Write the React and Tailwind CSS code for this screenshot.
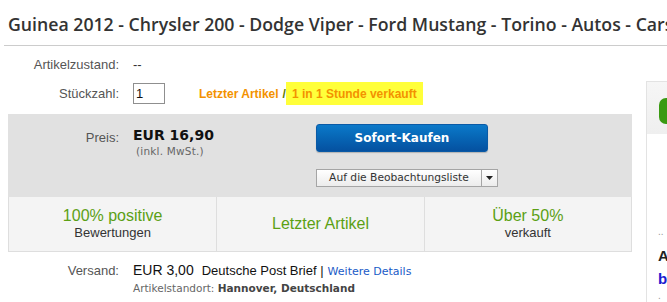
import React from "react";

export default function App() {
  const arial = { fontFamily: '"Liberation Sans", Arial, sans-serif' };
  const verdana = { fontFamily: '"DejaVu Sans", Verdana, sans-serif' };
  return (
    <div className="w-[667px] h-[302px] overflow-hidden bg-white relative" style={arial}>
      {/* Title */}
      <div className="h-[45px] pl-2 pt-[12px] whitespace-nowrap overflow-hidden">
        <h1 className="text-[17.7px] leading-[24px] font-semibold text-[#333]" style={{ fontFamily: '"Open Sans", sans-serif' }}>
          Guinea 2012 - Chrysler 200 - Dodge Viper - Ford Mustang - Torino - Autos - Cars
        </h1>
      </div>
      <div className="ml-1 h-px bg-[#cccccc]" />

      <div className="flex items-start">
        {/* Left column */}
        <div className="ml-2 w-[624px] shrink-0">
          <div className="mt-[10px] h-[18px] flex items-center">
            <div className="w-[111px] text-right text-[13px] text-[#555]">Artikelzustand:</div>
            <div className="ml-[14px] text-[13px] text-[#333]">--</div>
          </div>
          <div className="mt-[9px] h-[21px] flex items-center">
            <div className="w-[111px] text-right text-[13px] text-[#555]">Stückzahl:</div>
            <div className="ml-[14px] w-[32px] h-[21px] border border-[#8f8f8f] text-[13px] text-[#111] pl-[2px] leading-[19px]">1</div>
            <div className="ml-[34px] text-[12px] font-bold text-[#f39200] flex items-center">
              <span>Letzter Artikel</span>
              <span className="ml-[4px] text-[#5a7a00]">/</span>
              <span className="bg-[#ffff3a] h-[23px] w-[137px] flex items-center pl-[6px]">1 in 1 Stunde verkauft</span>
            </div>
          </div>

          {/* Gray box */}
          <div className="mt-[10px] h-[83px] bg-[#e1e1e1] flex">
            <div className="w-[111px] text-right text-[13px] text-[#555] pt-[14px]">Preis:</div>
            <div className="ml-[14px] w-[183px] pt-[11px]" style={verdana}>
              <div className="text-[14px] font-bold text-[#111] leading-[20px]">EUR 16,90</div>
              <div className="ml-[3px] text-[10.5px] tracking-[0.2px] text-[#666] leading-[13px]">(inkl. MwSt.)</div>
            </div>
            <div className="pt-[10px]" style={verdana}>
              <div className="w-[172px] h-[28px] rounded-[3px] bg-gradient-to-b from-[#0b79c9] to-[#0551a0] border border-[#0a5aa6] flex items-center justify-center text-white font-bold text-[12px] shadow-[0_1px_1px_rgba(0,0,0,0.2)]">
                Sofort-Kaufen
              </div>
              <div className="mt-[17px] w-[182px] h-[18px] border border-[#a5a5a5] flex bg-gradient-to-b from-white to-[#ececec]">
                <div className="flex-1 text-[10.7px] text-[#333] flex items-center justify-center leading-none">Auf die Beobachtungsliste</div>
                <div className="w-[16px] border-l border-[#a5a5a5] flex items-center justify-center">
                  <svg width="7" height="4" viewBox="0 0 7 4"><path d="M0 0h7L3.5 4z" fill="#222" /></svg>
                </div>
              </div>
            </div>
          </div>

          {/* Stats */}
          <div className="h-[55px] bg-[#f4f4f4] border border-t-0 border-[#dedede] grid grid-cols-3">
            <div className="flex flex-col items-center justify-center">
              <div className="text-[16px] leading-[18px] text-[#5ba014]">100% positive</div>
              <div className="text-[13px] leading-[16px] text-[#333]">Bewertungen</div>
            </div>
            <div className="flex items-center justify-center border-l border-[#dedede]">
              <div className="text-[16px] text-[#5ba014]">Letzter Artikel</div>
            </div>
            <div className="flex flex-col items-center justify-center border-l border-[#dedede]">
              <div className="text-[16px] leading-[18px] text-[#5ba014]">Über 50%</div>
              <div className="text-[13px] leading-[16px] text-[#333]">verkauft</div>
            </div>
          </div>

          {/* Versand */}
          <div className="mt-[8px] flex items-baseline">
            <div className="w-[111px] text-right text-[13px] text-[#555]">Versand:</div>
            <div className="ml-[14px] text-[14px] text-[#111]">EUR 3,00</div>
            <div className="ml-[8px] text-[13px] text-[#111]">Deutsche Post Brief |</div>
            <div className="ml-[4px] text-[11px] text-[#1a5bc7]" style={verdana}>Weitere Details</div>
          </div>
          <div className="ml-[125px] text-[10.5px] leading-[14px] text-[#666]" style={verdana}>
            Artikelstandort: <span className="font-bold text-[#444]">Hannover, Deutschland</span>
          </div>
        </div>

        {/* Right panel */}
        <div className="ml-[14px] mt-[35px] w-[40px] h-[300px] border-l border-t border-[#e3e3e3] shrink-0">
          <div className="h-[52px] bg-gradient-to-b from-[#f6f6f6] to-[#efefef] pl-[12px] pt-[16px]">
            <div className="w-[14px] h-[26px] bg-[#3a9a12] rounded-l-[7px] rounded-tr-[4px]" />
          </div>
          <div className="pl-[11px] pt-[92px] text-[10px] text-[#999] leading-[12px]">..</div>
          <div className="pl-[11px] mt-[9px] text-[15px] font-bold text-[#222] leading-[18px]">A</div>
          <div className="pl-[11px] mt-[5px] text-[15px] font-bold text-[#1a1ad0] leading-[18px]">b</div>
          <div className="pl-[11px] mt-[2px] text-[10px] text-[#999] leading-[12px]">.</div>
        </div>
      </div>
    </div>
  );
}
